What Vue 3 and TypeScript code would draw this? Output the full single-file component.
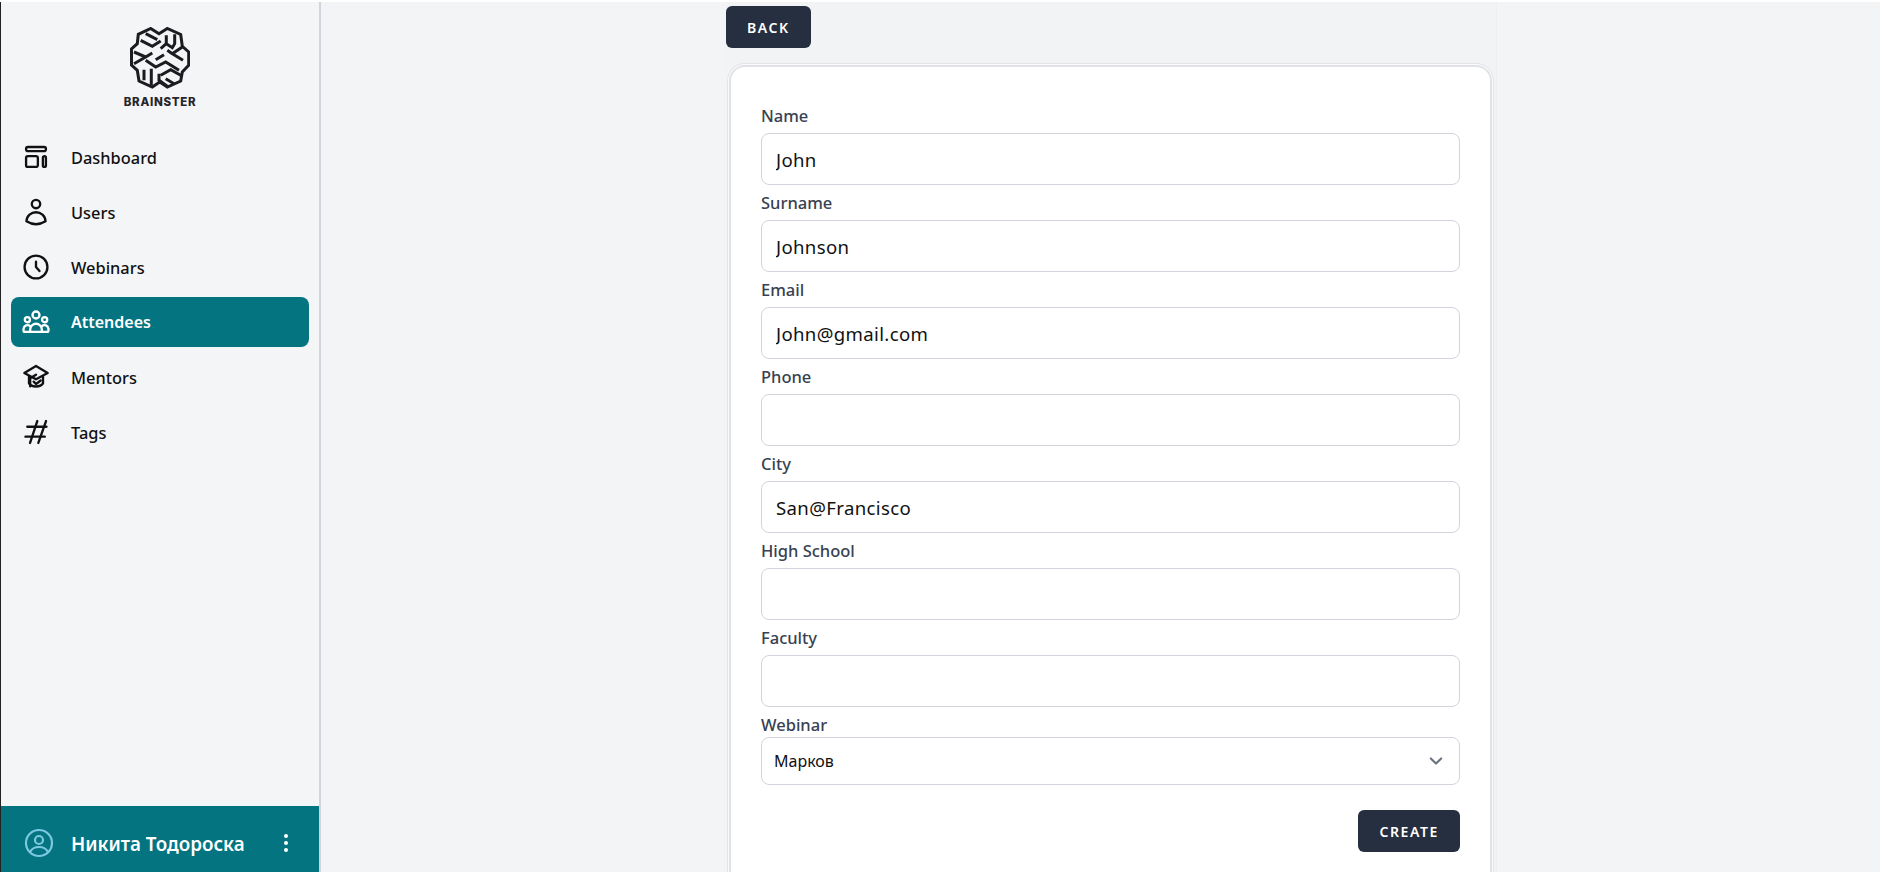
<template>
  <div class="page">
    <aside class="sidebar">
      <div class="logo">
        <svg class="logo-mark" viewBox="0 0 60 62" fill="none" stroke="#1c1c20" stroke-width="3" stroke-linejoin="miter">
          <path d="M20.7 1.5 L29 6.7 L37.3 1.5 L50.7 7.5 L52.3 19.3 L58.7 25 L58.7 38.3 L52.3 45 L50.7 54 L37.3 60 L29.7 55 L22.3 60 L9 54 L7.3 43.3 L1.5 38 L1.5 22 L7.3 16.7 L8.3 7.3 Z" />
          <path d="M15.7 6.7 L27.3 12.7 M10.7 13.3 L22.3 19.3 L30.7 14 M36.3 8.3 V16.7 L30.7 21.7 M36.3 16.7 L42.3 20.7 L44.7 16.7 V7.3" />
          <path d="M52.3 20 L42.3 26.7 L53 33.3 M37.3 23.3 L42.3 26.7 M25.7 32.7 L34 27.7 M4 25 L15.7 30 L4 36.7 M15.7 30 L22.3 26" />
          <path d="M15.7 33.3 L25.7 40 L35.7 35 L49 43.3 M14 42.7 V53.3 M21.3 41.7 V58.3 M29 46.7 V53.3 L37.3 59.3 M30.7 48.3 L40.7 42.7 L50.7 48.3 M35.7 51.7 L44 56.7" />
        </svg>
        <span class="logo-text">BRAINSTER</span>
      </div>
      <nav class="nav">
        <a v-for="item in navItems" :key="item.label" class="nav-item" :class="{ active: item.label === 'Attendees' }">
          <svg class="nav-icon" viewBox="0 0 24 24" fill="none" stroke="currentColor" stroke-width="2" stroke-linecap="round" stroke-linejoin="round">
            <path v-for="(d, i) in item.paths" :key="i" :d="d" />
          </svg>
          <span>{{ item.label }}</span>
        </a>
      </nav>
      <div class="user-bar">
        <svg class="user-icon" viewBox="0 0 30 30" fill="none" stroke="#7cc8e4" stroke-width="2.2">
          <circle cx="15" cy="15" r="13" />
          <circle cx="15" cy="12" r="4" />
          <path d="M6 24 C8 20 11 19 15 19 C19 19 22 20 24 24" />
        </svg>
        <span class="user-name">Никита Тодороска</span>
        <div class="dots"><i></i><i></i><i></i></div>
      </div>
    </aside>
    <main class="main">
      <div class="column">
        <button class="btn back" type="button">BACK</button>
        <form class="card" @submit.prevent>
          <div v-for="field in fields" :key="field.label" class="field">
            <label>{{ field.label }}</label>
            <input type="text" :value="field.value" />
          </div>
          <div class="field">
            <label class="short">Webinar</label>
            <div class="select">
              <span>Марков</span>
              <svg viewBox="0 0 20 20" fill="none" stroke="#6b7280" stroke-width="1.6" stroke-linecap="round" stroke-linejoin="round">
                <path d="M6 8l4 4 4-4" />
              </svg>
            </div>
          </div>
          <div class="actions">
            <button class="btn" type="submit">CREATE</button>
          </div>
        </form>
      </div>
    </main>
  </div>
</template>

<script setup lang="ts">
interface NavItem {
  label: string
  paths: string[]
}

const navItems: NavItem[] = [
  {
    label: 'Dashboard',
    paths: [
      'M5 3.4h14a1.5 1.5 0 0 1 1.5 1.5v.6A1.5 1.5 0 0 1 19 7H5a1.5 1.5 0 0 1-1.5-1.5v-.6A1.5 1.5 0 0 1 5 3.4z',
      'M5 11.3h7.1a1.5 1.5 0 0 1 1.5 1.5V19a1.5 1.5 0 0 1-1.5 1.5H5A1.5 1.5 0 0 1 3.5 19v-6.2A1.5 1.5 0 0 1 5 11.3z',
      'M19.2 11.3a1.3 1.3 0 0 1 1.3 1.3v6.6a1.3 1.3 0 0 1-2.6 0v-6.6a1.3 1.3 0 0 1 1.3-1.3z',
    ],
  },
  {
    label: 'Users',
    paths: [
      'M12 1.6a3.6 3.6 0 1 0 0 7.2a3.6 3.6 0 0 0 0-7.2z',
      'M3.8 20C4 15 8 12.2 12 12.2S20 15 20.2 20C15 23.2 9 23.2 3.8 20z',
    ],
  },
  {
    label: 'Webinars',
    paths: ['M12 2.2a9.8 9.8 0 1 0 0 19.6a9.8 9.8 0 0 0 0-19.6z', 'M12 7.5V12l3 3.5'],
  },
  {
    label: 'Attendees',
    paths: [
      'M12 3a3 3 0 1 0 0 6a3 3 0 0 0 0-6z',
      'M4.6 7.8a2.2 2.2 0 1 0 0 4.4a2.2 2.2 0 0 0 0-4.4z',
      'M19.4 7.8a2.2 2.2 0 1 0 0 4.4a2.2 2.2 0 0 0 0-4.4z',
      'M7 20.5v-2a5 5 0 0 1 10 0v2z',
      'M7 20.5H2.5a1.2 1.2 0 0 1-1.2-1.2v-1.5a3.5 3.5 0 0 1 5.7-2.3',
      'M17 20.5h4.5a1.2 1.2 0 0 0 1.2-1.2v-1.5a3.5 3.5 0 0 0-5.7-2.3',
    ],
  },
  {
    label: 'Mentors',
    paths: [
      'M12 2.5L2 8.5l10 5.5l10-5.5z',
      'M6 11.5v6c2 3.5 10 3.5 12 0v-6',
      'M12 10l-5 3v7',
      'M10 16l2 2l4-3',
    ],
  },
  {
    label: 'Tags',
    paths: ['M4.5 7.5h16.5', 'M3 16h16.5', 'M13.1 2.6L6.9 21.4', 'M20.6 2.6L14 21.4'],
  },
]

const fields = [
  { label: 'Name', value: 'John' },
  { label: 'Surname', value: 'Johnson' },
  { label: 'Email', value: 'John@gmail.com' },
  { label: 'Phone', value: '' },
  { label: 'City', value: 'San@Francisco' },
  { label: 'High School', value: '' },
  { label: 'Faculty', value: '' },
]
</script>

<style>
html,
body {
  margin: 0;
  height: 100%;
  overflow: hidden;
  background: #f3f4f6;
}
</style>

<style scoped>
.page {
  display: flex;
  height: 872px;
  overflow: hidden;
  background: #f3f4f6;
  font-family: "Noto Sans", "Open Sans", sans-serif;
  color: #111;
  box-sizing: border-box;
  border-top: 2px solid #fff;
}

.sidebar {
  width: 321px;
  flex-shrink: 0;
  display: flex;
  flex-direction: column;
  box-sizing: border-box;
  border-left: 1px solid #222;
  border-right: 2px solid #d1d5db;
  background: #f4f5f7;
}

.logo {
  display: flex;
  flex-direction: column;
  align-items: center;
  padding-top: 25px;
  height: 130px;
  box-sizing: border-box;
}

.logo-mark {
  width: 60px;
  height: 62px;
}

.logo-text {
  margin-top: 5px;
  font-family: "Inter", "Liberation Sans", sans-serif;
  font-size: 11.5px;
  line-height: 16px;
  font-weight: 800;
  letter-spacing: 0.7px;
  color: #26262c;
}

.nav {
  display: flex;
  flex-direction: column;
  gap: 5px;
  padding: 0 10px;
}

.nav-item {
  display: flex;
  align-items: center;
  height: 50px;
  padding: 0 12px 0 11px;
  border-radius: 8px;
  font-size: 16.4px;
  font-weight: 500;
  color: #111;
}

.nav-item.active {
  background: #047481;
  color: #fff;
  font-size: 16px;
  font-weight: 600;
}

.nav-icon {
  width: 28px;
  height: 28px;
  margin-right: 21px;
  flex-shrink: 0;
}

.user-bar {
  margin-top: auto;
  height: 66px;
  flex-shrink: 0;
  display: flex;
  align-items: center;
  box-sizing: border-box;
  padding: 7px 31px 0 23px;
  background: #047481;
  color: #fff;
}

.user-icon {
  width: 30px;
  height: 30px;
  margin-right: 17px;
}

.user-name {
  font-size: 18.8px;
  font-weight: 600;
  margin-top: 3px;
}

.dots {
  margin-left: auto;
  display: flex;
  flex-direction: column;
  gap: 3px;
}

.dots i {
  width: 4px;
  height: 4px;
  border-radius: 50%;
  background: #fff;
}

.main {
  flex: 1;
  display: flex;
  padding-left: 405px;
  padding-top: 4px;
}

.column {
  width: 771px;
  box-sizing: border-box;
  display: flex;
  flex-direction: column;
  align-items: flex-start;
  border-right: 1px solid #eeeff1;
  overflow: hidden;
  margin-top: -4px;
  padding-top: 4px;
  background: #f2f3f5;
}

.btn {
  height: 42px;
  flex-shrink: 0;
  padding: 0 21px;
  border: none;
  border-radius: 6px;
  background: #252f3f;
  color: #fff;
  font-family: inherit;
  font-size: 14px;
  font-weight: 600;
  letter-spacing: 1.6px;
}

.card {
  flex-shrink: 0;
  margin-top: 19px;
  margin-left: 5px;
  width: 759px;
  box-sizing: border-box;
  padding: 31px 30px 40px;
  background: #fff;
  border-radius: 14px;
  box-shadow: 0 0 0 2px #e0e2e6, 0 0 0 3px #fbfbfc, 0 0 0 4px #e2e4e8;
}

.field {
  display: flex;
  flex-direction: column;
}

.field label {
  display: block;
  box-sizing: border-box;
  height: 35px;
  padding-top: 7px;
  font-size: 16.5px;
  line-height: 22px;
  font-weight: 500;
  color: #374151;
}

.field label.short {
  height: 30px;
}

.field input {
  height: 52px;
  box-sizing: border-box;
  padding: 0 14px;
  border: 1px solid #d1d5db;
  border-radius: 8px;
  background: #fff;
  font-family: inherit;
  font-size: 18.6px;
  letter-spacing: 0.35px;
  color: #111;
  outline: none;
}

.select {
  height: 48px;
  box-sizing: border-box;
  display: flex;
  align-items: center;
  justify-content: space-between;
  padding: 0 10px 0 12px;
  border: 1px solid #d1d5db;
  border-radius: 8px;
  font-size: 16px;
  color: #111;
}

.select svg {
  width: 26px;
  height: 26px;
}

.actions {
  display: flex;
  justify-content: flex-end;
  margin-top: 25px;
}
</style>
